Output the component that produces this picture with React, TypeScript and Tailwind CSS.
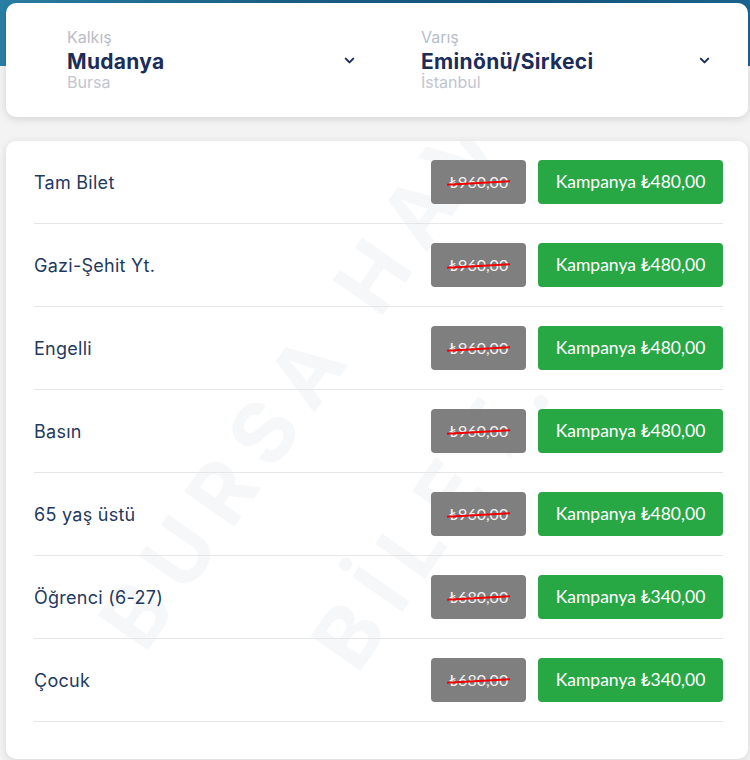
import React from "react";
import { ChevronDown } from "lucide-react";

const rows = [
  { name: "Tam Bilet", old: "₺960,00", price: "₺480,00" },
  { name: "Gazi-Şehit Yt.", old: "₺960,00", price: "₺480,00" },
  { name: "Engelli", old: "₺960,00", price: "₺480,00" },
  { name: "Basın", old: "₺960,00", price: "₺480,00" },
  { name: "65 yaş üstü", old: "₺960,00", price: "₺480,00" },
  { name: "Öğrenci (6-27)", old: "₺680,00", price: "₺340,00" },
  { name: "Çocuk", old: "₺680,00", price: "₺340,00" },
];

function Place({ label, name, sub }: { label: string; name: string; sub: string }) {
  return (
    <div className="flex items-center justify-between">
      <div className="flex flex-col">
        <span className="text-[16px] leading-[20px] text-[#b9bccb]">{label}</span>
        <span className="mt-[4px] text-[21px] leading-[22px] font-bold text-[#1c2d5a] tracking-[0.015em]">{name}</span>
        <span className="text-[16px] leading-[18px] text-[#c2c5d1]">{sub}</span>
      </div>
      <ChevronDown size={15} strokeWidth={3.2} className="text-[#1c2d5a] mt-[2px]" />
    </div>
  );
}

export default function App() {
  return (
    <div className="min-h-[760px] w-[750px] bg-[#f3f3f3] font-['Inter',sans-serif]">
      <div className="h-[66px] w-full bg-[linear-gradient(90deg,#2a7fa6,#1a5f86_40%,#14577e_70%,#1b6590)]" />
      <div className="-mt-[63px] pl-[6px] pr-[2px]">
        <div className="h-[114px] rounded-[10px] bg-white shadow-[0_2px_8px_rgba(0,0,0,0.13)] grid grid-cols-[290px_291px] items-start gap-x-[64px] pt-[24px] pl-[61px]">
          <Place label="Kalkış" name="Mudanya" sub="Bursa" />
          <Place label="Varış" name="Eminönü/Sirkeci" sub="İstanbul" />
        </div>

        <div className="relative mt-[24px] overflow-hidden rounded-[10px] bg-white shadow-[0_2px_8px_rgba(0,0,0,0.12)] pl-[28px] pr-[25px] pb-[37px]">
          <div className="pointer-events-none absolute left-[319px] top-[204px] -translate-x-1/2 -translate-y-1/2 -rotate-[55deg] select-none text-[84px] font-bold leading-none tracking-[0.2em] text-[#f6f7f9] whitespace-nowrap">
            BURSA HAVA
          </div>
          <div className="pointer-events-none absolute left-[430px] top-[370px] -translate-x-1/2 -translate-y-1/2 -rotate-[55deg] select-none text-[84px] font-bold leading-none tracking-[0.2em] text-[#f6f7f9] whitespace-nowrap">
            BİLET.
          </div>
          {rows.map((r) => (
            <div
              key={r.name}
              className="relative flex items-center justify-between border-b border-[#e6e6e6] py-[19px]"
            >
              <span className="text-[18px] text-[#1f3a5f] tracking-[0.015em]">{r.name}</span>
              <div className="flex items-center gap-[12px] font-['Lato',sans-serif]">
                <div className="relative flex h-[44px] w-[95px] items-center justify-center rounded-[4px] bg-[#7f7f7f] text-[16px] text-[#f2f2f2]">
                  <span className="relative">
                    {r.old}
                    <span className="absolute left-[-2px] right-[-2px] top-[52%] h-[2px] -rotate-[3deg] bg-[#f00000]" />
                  </span>
                </div>
                <div className="flex h-[44px] w-[185px] items-center justify-center rounded-[4px] bg-[#28a745] text-[17.5px] text-white">
                  Kampanya {r.price}
                </div>
              </div>
            </div>
          ))}
        </div>
      </div>
    </div>
  );
}
